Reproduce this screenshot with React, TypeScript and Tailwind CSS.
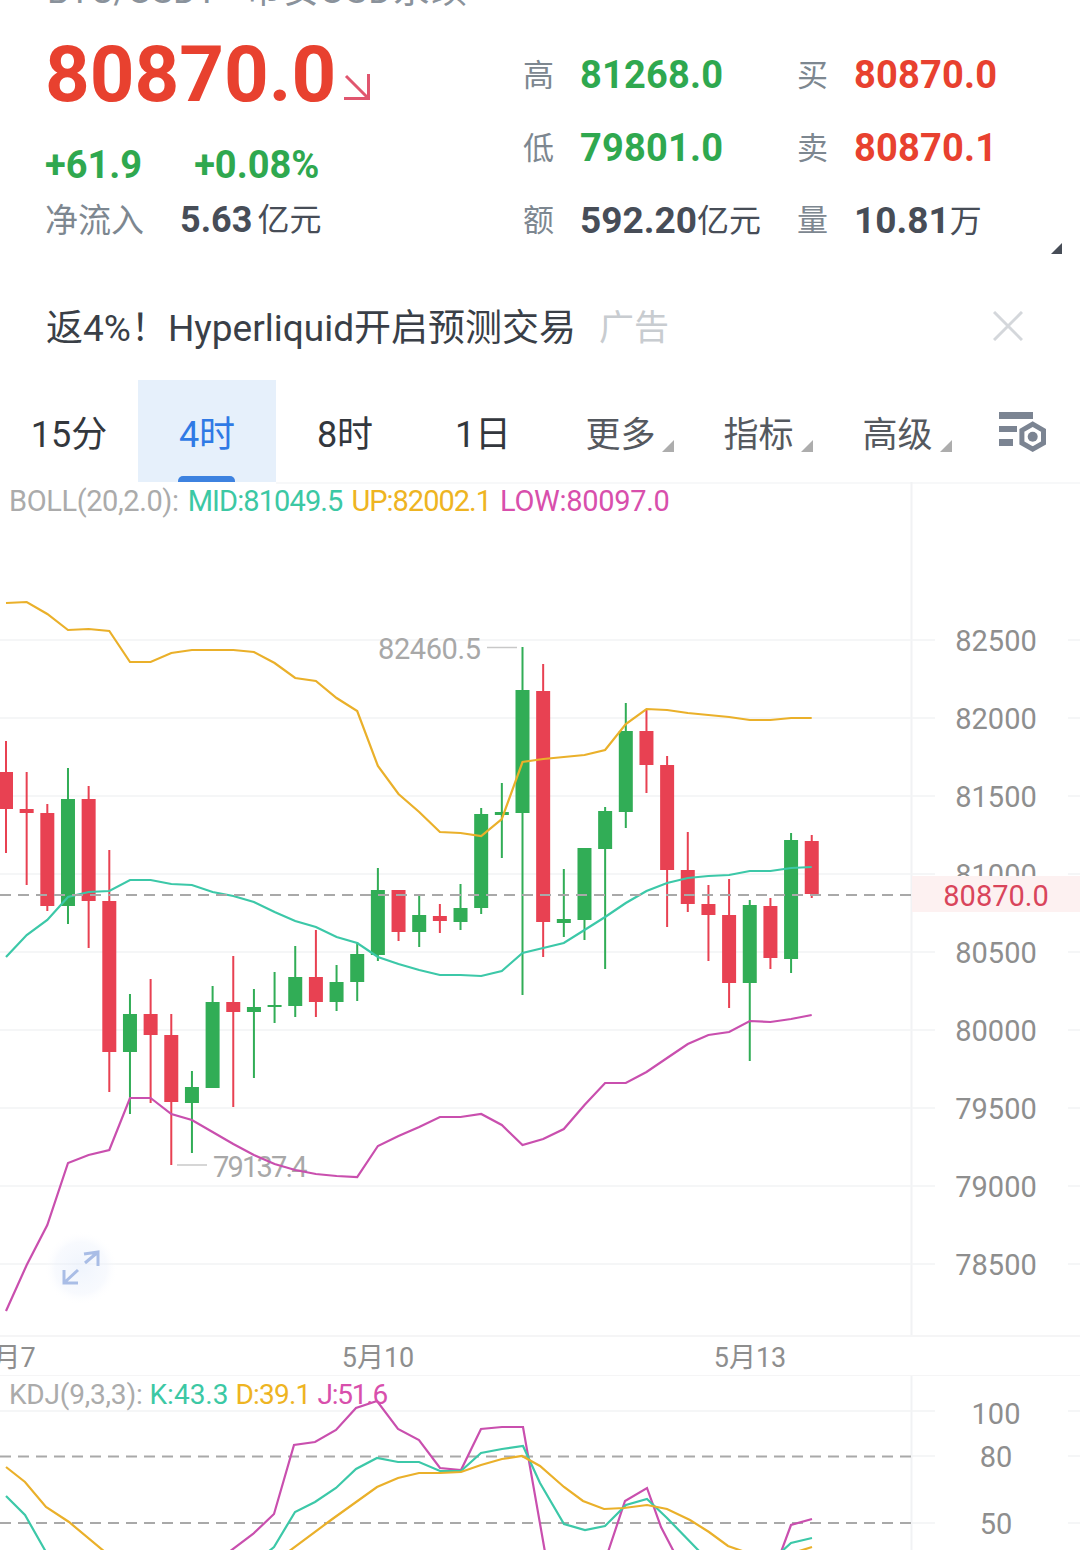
const sans = "font-['Roboto','Noto_Sans_CJK_SC',sans-serif]";

type Candle = { c: "r" | "g"; hi: number; top: number; bot: number; lo: number };

const step = 20.66;
const xAt = (i: number) => 6 + i * step;

// y coordinates in page pixels so they can be read straight off the screenshot
const candles: Candle[] = [
  { c: "r", hi: 741, top: 772, bot: 809, lo: 853 },
  { c: "r", hi: 772, top: 809, bot: 813, lo: 885 },
  { c: "r", hi: 804, top: 813, bot: 906, lo: 911 },
  { c: "g", hi: 768, top: 799, bot: 906, lo: 924 },
  { c: "r", hi: 786, top: 799, bot: 901, lo: 948 },
  { c: "r", hi: 850, top: 901, bot: 1052, lo: 1092 },
  { c: "g", hi: 994, top: 1014, bot: 1052, lo: 1114 },
  { c: "r", hi: 979, top: 1014, bot: 1035, lo: 1103 },
  { c: "r", hi: 1014, top: 1035, bot: 1102, lo: 1165 },
  { c: "g", hi: 1071, top: 1087, bot: 1103, lo: 1153 },
  { c: "g", hi: 986, top: 1002, bot: 1088, lo: 1088 },
  { c: "r", hi: 956, top: 1002, bot: 1012, lo: 1107 },
  { c: "g", hi: 989, top: 1007, bot: 1012, lo: 1078 },
  { c: "g", hi: 972, top: 1005, bot: 1007, lo: 1023 },
  { c: "g", hi: 946, top: 977, bot: 1006, lo: 1017 },
  { c: "r", hi: 930, top: 977, bot: 1002, lo: 1017 },
  { c: "g", hi: 965, top: 982, bot: 1002, lo: 1011 },
  { c: "g", hi: 942, top: 954, bot: 982, lo: 1001 },
  { c: "g", hi: 868, top: 890, bot: 955, lo: 961 },
  { c: "r", hi: 890, top: 890, bot: 932, lo: 941 },
  { c: "g", hi: 896, top: 915, bot: 932, lo: 947 },
  { c: "r", hi: 904, top: 916, bot: 921, lo: 933 },
  { c: "g", hi: 884, top: 908, bot: 922, lo: 930 },
  { c: "g", hi: 808, top: 814, bot: 908, lo: 914 },
  { c: "g", hi: 783, top: 812, bot: 815, lo: 858 },
  { c: "g", hi: 647, top: 690, bot: 813, lo: 995 },
  { c: "r", hi: 664, top: 691, bot: 922, lo: 957 },
  { c: "g", hi: 869, top: 919, bot: 923, lo: 937 },
  { c: "g", hi: 848, top: 848, bot: 920, lo: 940 },
  { c: "g", hi: 807, top: 811, bot: 849, lo: 969 },
  { c: "g", hi: 703, top: 731, bot: 812, lo: 828 },
  { c: "r", hi: 710, top: 731, bot: 765, lo: 793 },
  { c: "r", hi: 756, top: 765, bot: 870, lo: 927 },
  { c: "r", hi: 832, top: 870, bot: 904, lo: 912 },
  { c: "r", hi: 885, top: 904, bot: 915, lo: 961 },
  { c: "r", hi: 879, top: 915, bot: 983, lo: 1008 },
  { c: "g", hi: 900, top: 905, bot: 983, lo: 1061 },
  { c: "r", hi: 898, top: 906, bot: 958, lo: 969 },
  { c: "g", hi: 833, top: 840, bot: 959, lo: 973 },
  { c: "r", hi: 835, top: 841, bot: 894, lo: 898 },
];

const up = [603, 602, 614, 630, 629, 631, 662, 662, 653, 650, 650, 650, 652, 663, 678, 681, 698, 711, 766, 794, 812, 832, 833, 836, 819, 762, 759, 757, 755, 750, 724, 709, 710, 713, 715, 717, 720, 720, 718, 718];
const mid = [957, 935, 920, 897, 892, 891, 880, 880, 884, 885, 892, 896, 902, 912, 921, 927, 937, 943, 957, 964, 970, 975, 975, 976, 971, 953, 948, 943, 930, 917, 903, 891, 883, 878, 876, 875, 871, 871, 868, 867];
const low = [1311, 1265, 1225, 1163, 1155, 1150, 1098, 1098, 1114, 1120, 1132, 1144, 1155, 1164, 1170, 1174, 1176, 1177, 1146, 1136, 1127, 1117, 1117, 1114, 1125, 1145, 1139, 1129, 1105, 1083, 1083, 1072, 1058, 1044, 1035, 1032, 1021, 1022, 1019, 1015];

const toPoints = (ys: number[]) => ys.map((y, i) => `${xAt(i).toFixed(1)},${y}`).join(" ");

const axis = [
  { y: 640, t: "82500" },
  { y: 718, t: "82000" },
  { y: 796, t: "81500" },
  { y: 874, t: "81000" },
  { y: 952, t: "80500" },
  { y: 1030, t: "80000" },
  { y: 1108, t: "79500" },
  { y: 1186, t: "79000" },
  { y: 1264, t: "78500" },
];

const kdjK = "6,1496 25,1515 46,1552 M268,1552 274,1547 295,1512 315,1502 336,1488 356,1469 377,1458 398,1462 419,1462 440,1471 461,1471 481,1453 502,1449 523,1446 540,1483 564,1524 585,1530 605,1526 626,1505 647,1499 667,1518 700,1552 M781,1552 791,1543 812,1538";
const kdjD = "6,1467 25,1482 46,1507 69,1522 105,1552 M288,1552 331,1520 377,1487 398,1478 419,1473 440,1473 461,1472 481,1465 502,1459 522,1456 540,1466 564,1487 583,1501 604,1509 624,1508 647,1505 667,1509 690,1520 709,1532 728,1546 745,1552 M796,1552 812,1547";
const kdjJ = "229,1552 253,1534 274,1514 294,1445 315,1442 336,1430 356,1408 377,1401 398,1429 419,1440 440,1468 461,1470 481,1429 502,1427 523,1427 545,1552 M608,1552 625,1501 647,1488 661,1527 674,1552 M781,1552 791,1525 812,1519";
const toPath = (s: string) => "M" + s;

function Stat({ label, value, color, unit }: { label: string; value: string; color: string; unit?: string }) {
  return (
    <div className="flex items-center">
      <span className="w-[57px] text-[31px] leading-none text-[#7d8790]">{label}</span>
      <span className={`leading-none font-bold ${unit ? "text-[37px]" : "text-[38px] tracking-[0.2px]"} ${color}`}>{value}</span>
      {unit ? <span className="text-[32px] leading-none text-[#474d57]">{unit}</span> : null}
    </div>
  );
}

function Tab({ label, active, menu, w }: { label: string; active?: boolean; menu?: boolean; w: string }) {
  return (
    <div className={`relative flex h-full items-center justify-center pt-[8px] ${w} ${active ? "bg-[#e6f0fb]" : ""}`}>
      <span className={`leading-none ${active ? "text-[36px] text-[#2f7ae5]" : menu ? "text-[35px] text-[#55595f]" : "text-[36px] text-[#33373d]"}`}>{label}</span>
      {menu ? (
        <span className="absolute top-[60px] right-[15px] h-0 w-0 border-b-[12px] border-l-[12px] border-b-[#adadad] border-l-transparent" />
      ) : null}
      {active ? <span className="absolute bottom-0 left-[40px] h-[6px] w-[57px] rounded-t-[5px] bg-[#3d82e0]" /> : null}
    </div>
  );
}

export default function App() {
  return (
    <div className={`h-[1550px] w-[1080px] overflow-hidden bg-white ${sans}`}>
      <div className="-mt-[25px] flex h-[34px] gap-[28px] pl-[47px] text-[36px] leading-[32px] text-[#8a929b]">
        <span>BTC/USDT</span>
        <span className="tracking-[1.5px]">币安USD永续</span>
      </div>

      <section className="flex h-[272px] pl-[45px]">
        <div className="w-[478px]">
          <div className="flex h-[120px] items-end">
            <span className="text-[78px] leading-[108px] font-bold text-[#e8412f]">80870.0</span>
            <svg className="mb-[29px] ml-[8px]" width="26" height="26" viewBox="0 0 26 26" fill="none" stroke="#e0566f" strokeWidth="3">
              <path d="M2 2 L24 24 M0 24.5 H24.5 V0" />
            </svg>
          </div>
          <div className="mt-[17px] flex items-center gap-[52px] text-[38px] leading-none font-bold text-[#2fa84f]">
            <span>+61.9</span>
            <span>+0.08%</span>
          </div>
          <div className="mt-[18px] flex items-center">
            <span className="w-[135px] text-[33px] leading-none text-[#7d8790]">净流入</span>
            <span className="text-[36px] leading-none font-bold text-[#474d57]">5.63</span>
            <span className="ml-[5px] text-[32px] leading-none text-[#474d57]">亿元</span>
          </div>
        </div>
        <div className="relative grid flex-1 grid-cols-[274px_1fr] content-start gap-y-[35px] pt-[47px]">
          <Stat label="高" value="81268.0" color="text-[#2fa84f]" />
          <Stat label="买" value="80870.0" color="text-[#e8412f]" />
          <Stat label="低" value="79801.0" color="text-[#2fa84f]" />
          <Stat label="卖" value="80870.1" color="text-[#e8412f]" />
          <Stat label="额" value="592.20" color="text-[#474d57]" unit="亿元" />
          <Stat label="量" value="10.81" color="text-[#474d57]" unit="万" />
          <span className="absolute top-[234px] right-[18px] h-0 w-0 border-b-[11px] border-l-[11px] border-b-[#474d57] border-l-transparent" />
        </div>
      </section>

      <div className="mb-[5px] flex h-[94px] items-center pr-[57px] pl-[46px]">
        <span className="text-[37px] leading-none text-[#3a3f47]">返4%！Hyperliquid开启预测交易</span>
        <span className="ml-[23px] text-[35px] leading-none text-[#c8ccd0]">广告</span>
        <svg className="mb-[4px] ml-auto" width="30" height="30" viewBox="0 0 30 30" stroke="#d4d7db" strokeWidth="3">
          <path d="M1 1 L29 29 M29 1 L1 29" />
        </svg>
      </div>

      <nav className="flex h-[102px] items-stretch">
        <Tab label="15分" w="w-[138px]" />
        <Tab label="4时" w="w-[138px]" active />
        <Tab label="8时" w="w-[138px]" />
        <Tab label="1日" w="w-[138px]" />
        <Tab label="更多" w="w-[137px]" menu />
        <Tab label="指标" w="w-[139px]" menu />
        <Tab label="高级" w="w-[139px]" menu />
        <svg className="mt-[30px] ml-[32px]" width="50" height="46" viewBox="0 0 50 46">
          <path d="M0 2h34v7h-34z M0 16h18v6h-18z M0 29h14v7h-14z" fill="#7b8492" />
          <path d="M33.7 14.2 L44.5 20.45 V32.95 L33.7 39.2 L22.9 32.95 V20.45 Z" fill="none" stroke="#7b8492" strokeWidth="5" />
          <circle cx="33.7" cy="26.7" r="5" fill="#7b8492" />
        </svg>
      </nav>

      <div className="relative h-[853px]">
        <div className="absolute top-[2px] left-[9px] flex gap-[9px] text-[29px] leading-[34px]">
          <span className="tracking-[-0.4px] text-[#ababab]">BOLL(20,2.0):</span>
          <span className="tracking-[-0.9px] text-[#3cc8a4]">MID:81049.5</span>
          <span className="tracking-[-1px] text-[#eeb422]">UP:82002.1</span>
          <span className="tracking-[-0.3px] text-[#d84fac]">LOW:80097.0</span>
        </div>
        <svg width="1080" height="853" viewBox="0 482 1080 853" className="block">
          <defs>
            <radialGradient id="glow">
              <stop offset="0%" stopColor="#e3ecfb" stopOpacity="0.55" />
              <stop offset="70%" stopColor="#edf2fc" stopOpacity="0.4" />
              <stop offset="100%" stopColor="#ffffff" stopOpacity="0" />
            </radialGradient>
          </defs>
          <path d="M276 483 H1080" stroke="#f5f6f7" strokeWidth="1.5" />
          <path d="M911.5 482 V1335" stroke="#f1f2f4" strokeWidth="2" />
          {axis.map((a) => (
            <g key={a.y}>
              <path d={`M0 ${a.y} H935 M1068 ${a.y} H1080`} stroke="#f2f3f5" strokeWidth="1.5" />
              <text x="996" y={a.y + 11} textAnchor="middle" fontSize="29" fill="#8e8e8e">
                {a.t}
              </text>
            </g>
          ))}
          <rect x="912" y="876" width="168" height="36" fill="#fdf1f1" />
          <text x="996" y="906" textAnchor="middle" fontSize="29" fill="#d9455b">
            80870.0
          </text>

          <text x="378" y="659" fontSize="29" letterSpacing="-0.4" fill="#a8a8a8">
            82460.5
          </text>
          <path d="M487 647.5 H517" stroke="#c8c8c8" strokeWidth="1.5" />
          <text x="213" y="1177" fontSize="29" letterSpacing="-1.8" fill="#a8a8a8">
            79137.4
          </text>
          <path d="M177 1165 H207" stroke="#c8c8c8" strokeWidth="1.5" />

          {candles.map((k, i) => {
            const fill = k.c === "r" ? "#e84152" : "#31ad56";
            const x = xAt(i);
            return (
              <g key={i} fill={fill}>
                <rect x={x - 1} y={k.hi} width="2" height={k.lo - k.hi} />
                <rect x={x - 7} y={k.top} width="14" height={k.bot - k.top} />
              </g>
            );
          })}

          <polyline points={toPoints(up)} fill="none" stroke="#eab02a" strokeWidth="2.2" />
          <polyline points={toPoints(mid)} fill="none" stroke="#3cc8a8" strokeWidth="2.2" />
          <polyline points={toPoints(low)} fill="none" stroke="#c94fae" strokeWidth="2.2" />
          <path d="M0 895 H911" stroke="#a9a9a9" strokeWidth="2.2" strokeDasharray="11 7" />

          <circle cx="81" cy="1268" r="37" fill="url(#glow)" />
          <path d="M84 1254 L98 1252 V1266 M98 1252 L85 1263 M64 1270 V1283 H78 M65 1282 L78 1270" fill="none" stroke="#a9bde6" strokeWidth="3" />
        </svg>
      </div>

      <div className="h-[2px] bg-[#f5f5f6]" />
      <svg width="1080" height="38" viewBox="0 1337 1080 38" className="block">
        <g fontSize="27" fill="#8e8e8e" textAnchor="middle">
          <text x="7" y="1367">5月7</text>
          <text x="378" y="1367">5月10</text>
          <text x="750" y="1367">5月13</text>
        </g>
      </svg>
      <div className="h-[1px] bg-[#f5f5f6]" />

      <div className="relative h-[174px]">
        <div className="absolute top-[2px] left-[9px] flex gap-[7px] text-[28px] leading-[34px]">
          <span className="tracking-[-0.2px] text-[#ababab]">KDJ(9,3,3):</span>
          <span className="text-[#3cc8a4]">K:43.3</span>
          <span className="tracking-[-0.8px] text-[#eeb422]">D:39.1</span>
          <span className="tracking-[-1.2px] text-[#d84fac]">J:51.6</span>
        </div>
        <svg width="1080" height="174" viewBox="0 1376 1080 174" className="block">
          <path d="M911.5 1376 V1550" stroke="#f1f2f4" strokeWidth="2" />
          <path d="M0 1411 H935 M1068 1411 H1080 M911 1456 H935 M1068 1456 H1080 M911 1523 H935 M1068 1523 H1080" stroke="#f2f3f5" strokeWidth="1.5" />
          <path d="M0 1456.5 H911 M0 1523 H911" stroke="#a9a9a9" strokeWidth="2.2" strokeDasharray="11 7" />
          <path d={toPath(kdjJ)} fill="none" stroke="#c94fae" strokeWidth="2.2" />
          <path d={toPath(kdjK)} fill="none" stroke="#3cc8a8" strokeWidth="2.2" />
          <path d={toPath(kdjD)} fill="none" stroke="#eab02a" strokeWidth="2.2" />
          <g fontSize="29" fill="#8e8e8e" textAnchor="middle">
            <text x="996" y="1424">100</text>
            <text x="996" y="1467">80</text>
            <text x="996" y="1534">50</text>
          </g>
        </svg>
      </div>
    </div>
  );
}
